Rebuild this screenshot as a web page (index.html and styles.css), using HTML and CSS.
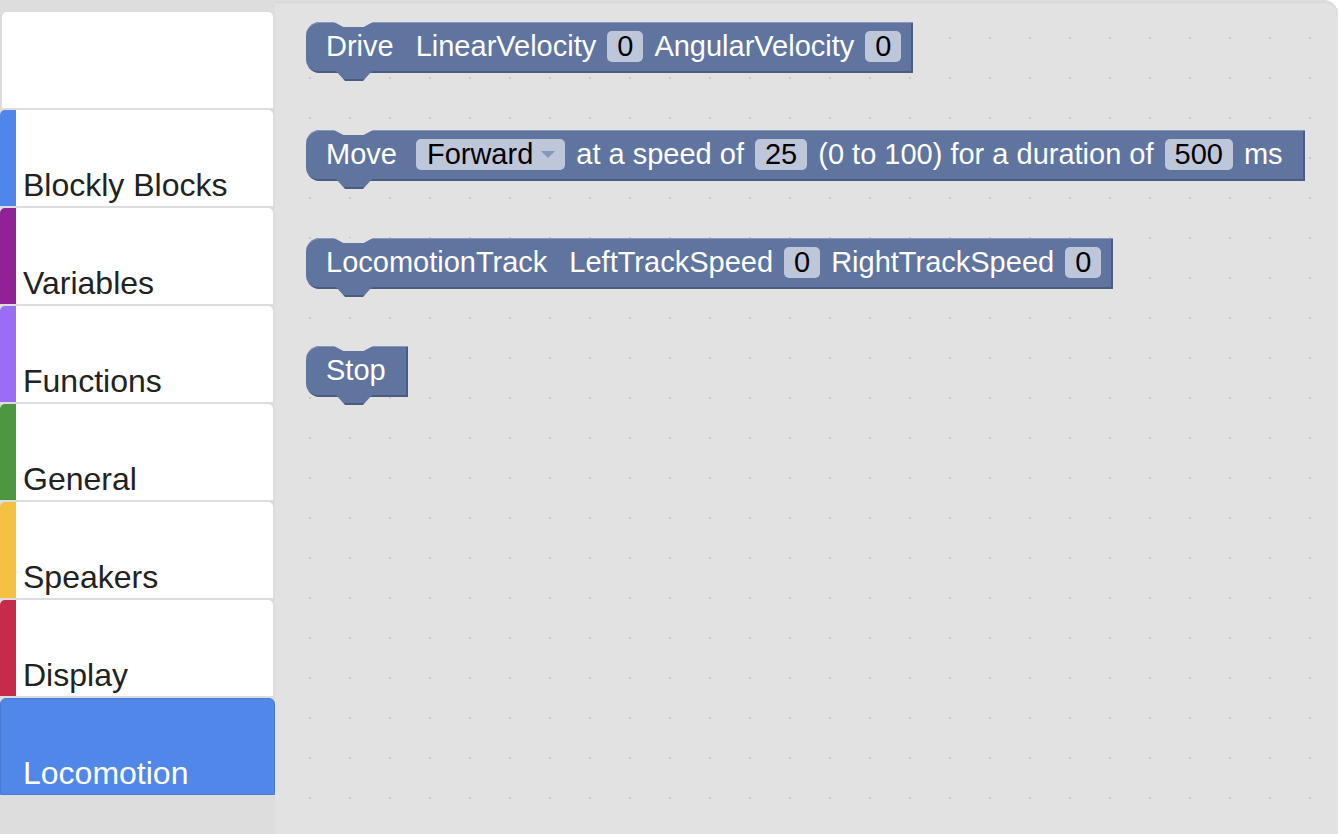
FILE: index.html
```html
<!DOCTYPE html>
<html>
<head>
<meta charset="utf-8">
<title>Blockly Toolbox</title>
<link rel="stylesheet" href="styles.css">
</head>
<body>
<div class="app">
  <aside class="toolbox">
    <div class="tab tab-blank"></div>
    <div class="tab cat-blockly"><span>Blockly Blocks</span></div>
    <div class="tab cat-variables"><span>Variables</span></div>
    <div class="tab cat-functions"><span>Functions</span></div>
    <div class="tab cat-general"><span>General</span></div>
    <div class="tab cat-speakers"><span>Speakers</span></div>
    <div class="tab cat-display"><span>Display</span></div>
    <div class="tab tab-selected"><span>Locomotion</span></div>
  </aside>
  <main class="workspace">
    <div class="block">
      <span class="lbl">Drive</span>
      <span class="lbl">LinearVelocity</span>
      <span class="fld">0</span>
      <span class="lbl">AngularVelocity</span>
      <span class="fld">0</span>
    </div>
    <div class="block">
      <span class="lbl">Move</span>
      <span class="fld dd">Forward<i class="caret"></i></span>
      <span class="lbl">at a speed of</span>
      <span class="fld">25</span>
      <span class="lbl">(0 to 100) for a duration of</span>
      <span class="fld">500</span>
      <span class="lbl">ms</span>
    </div>
    <div class="block">
      <span class="lbl">LocomotionTrack</span>
      <span class="lbl">LeftTrackSpeed</span>
      <span class="fld">0</span>
      <span class="lbl">RightTrackSpeed</span>
      <span class="fld">0</span>
    </div>
    <div class="block">
      <span class="lbl">Stop</span>
    </div>
  </main>
</div>
</body>
</html>
```
FILE: styles.css
```css
html, body {
  margin: 0;
  padding: 0;
  background: #ffffff;
}
body {
  width: 1340px;
  height: 834px;
  overflow: hidden;
  font-family: "Liberation Sans", Arial, Helvetica, sans-serif;
}
.app {
  display: flex;
  width: 1338px;
  height: 834px;
  background: #dddddd;
  border-top-right-radius: 14px;
}
.toolbox {
  width: 275px;
  flex: none;
  box-sizing: border-box;
  padding-top: 12px;
  display: flex;
  flex-direction: column;
  gap: 2px;
}
.tab {
  width: 273px;
  height: 96px;
  box-sizing: border-box;
  background: #ffffff;
  border-radius: 5px 5px 0 0;
  display: flex;
  align-items: flex-end;
  padding: 0 0 3px 7px;
  font-size: 32px;
  line-height: 36px;
  color: #222222;
  border-left: 16px solid transparent;
}
.tab-blank {
  margin-left: 2px;
  width: 271px;
  border-left: 0;
}
.cat-blockly { border-left-color: #5086e9; }
.cat-variables { border-left-color: #912295; }
.cat-functions { border-left-color: #9b6cf6; }
.cat-general { border-left-color: #4d983f; }
.cat-speakers { border-left-color: #f4c143; }
.cat-display { border-left-color: #c52b4b; }
.tab-selected {
  width: 275px;
  height: 97px;
  background: #5087e9;
  border: 1px solid #4a79d6;
  border-radius: 6px 6px 0 0;
  color: #ffffff;
  padding-left: 22px;
}
.workspace {
  flex: 1;
  margin-top: 2px;
  background-color: #e2e2e2;
  background-image: radial-gradient(circle at 1px 1px, #c6c6c6 1px, transparent 1.05px);
  background-size: 40px 40px;
  background-position: 34px 35px;
  border-top-right-radius: 14px;
  box-shadow: inset 0 1px 0 #d6d6d6;
  box-sizing: border-box;
  padding: 20px 0 0 31px;
  display: flex;
  flex-direction: column;
  align-items: flex-start;
  gap: 57px;
}
.block {
  position: relative;
  display: flex;
  align-items: center;
  gap: 11px;
  height: 51px;
  box-sizing: border-box;
  padding: 0 12px 2px 20px;
  background: #6074a0;
  border-radius: 14px 0 0 14px;
  color: #ffffff;
  font-size: 29px;
  white-space: nowrap;
  box-shadow: inset 0 1px 0 #8797bd, inset -2px -2px 0 #4c5b82;
}
.block::before {
  content: "";
  position: absolute;
  left: 28px;
  top: 0;
  width: 39px;
  height: 5px;
  background: #e2e2e2;
  clip-path: polygon(0 0, 100% 0, 76% 100%, 24% 100%);
}
.block::after {
  content: "";
  position: absolute;
  left: 30px;
  top: calc(100% - 2px);
  width: 36px;
  height: 10px;
  background: linear-gradient(#6074a0 0 8px, #4c5b82 8px);
  clip-path: polygon(0 0, 100% 0, 75% 100%, 25% 100%);
}
.lbl + .lbl {
  margin-left: 11px;
}
.block > .lbl:last-child {
  margin-right: 10px;
}
.fld {
  background: #bec7da;
  color: #000000;
  border-radius: 5px;
  height: 31px;
  line-height: 31px;
  padding: 0 10px;
}
.dd {
  display: flex;
  align-items: center;
  gap: 8px;
  margin-left: 8px;
  padding: 0 10px 0 11px;
}
.caret {
  width: 0;
  height: 0;
  border-left: 7px solid transparent;
  border-right: 7px solid transparent;
  border-top: 7px solid #8596be;
}
```
